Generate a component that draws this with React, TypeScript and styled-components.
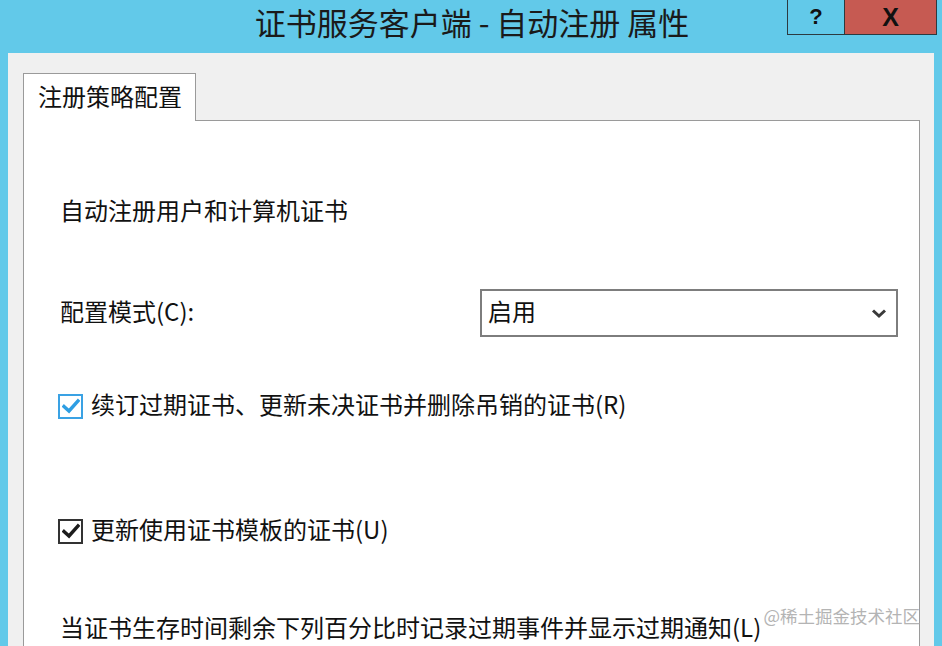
import styled, { createGlobalStyle } from 'styled-components';

// PARAM global
const GlobalStyle = createGlobalStyle`
  html, body {
    margin: 0;
    padding: 0;
    background: #62c9e9;
  }
  body {
    font-family: 'Noto Sans CJK SC', 'Noto Sans', sans-serif;
    color: #111;
  }
`;

// COMPONENT check mark
const CheckMark = ({ color }: { color: string }) => (
  <svg width='18' height='16' viewBox='0 0 18 16'>
    <path d='M2 8.5 L7 13 L16 3' fill='none' stroke={color} strokeWidth='3.4' strokeLinecap='square' />
  </svg>
);

// COMPONENT check row
const CheckRow = ({ label, focused, top }: { label: string; focused?: boolean; top: number }) => {
  return (
    <Panel.CheckRow $top={top}>
      <Panel.Box $focused={focused}>
        <CheckMark color={focused ? '#2e9ee3' : '#1c1c1c'} />
      </Panel.Box>
      <Panel.Label>{label}</Panel.Label>
    </Panel.CheckRow>
  );
};

// COMPONENT dialog
const App = () => {
  return (
    <>
      <GlobalStyle />
      <Win.Frame>
        <Win.TitleBar>
          <Win.Title>证书服务客户端 - 自动注册 属性</Win.Title>
          <Win.Buttons>
            <Win.HelpBtn>?</Win.HelpBtn>
            <Win.CloseBtn>X</Win.CloseBtn>
          </Win.Buttons>
        </Win.TitleBar>
        <Win.Body>
          <Tabs.Strip>
            <Tabs.Tab>注册策略配置</Tabs.Tab>
          </Tabs.Strip>
          <Panel.Container>
            <Panel.Line $top={73}>自动注册用户和计算机证书</Panel.Line>
            <Panel.ConfigRow>
              <Panel.Label>配置模式(C):</Panel.Label>
              <Panel.Combo>
                <Panel.Label>启用</Panel.Label>
                <svg width='16' height='11' viewBox='0 0 16 11'>
                  <path d='M2 2.5 L8 8 L14 2.5' fill='none' stroke='#3a3a3a' strokeWidth='3' />
                </svg>
              </Panel.Combo>
            </Panel.ConfigRow>
            <CheckRow top={53} focused label='续订过期证书、更新未决证书并删除吊销的证书(R)' />
            <CheckRow top={93} label='更新使用证书模板的证书(U)' />
            <Panel.Line $top={64}>当证书生存时间剩余下列百分比时记录过期事件并显示过期通知(L)</Panel.Line>
          </Panel.Container>
          <Watermark>@稀土掘金技术社区</Watermark>
        </Win.Body>
      </Win.Frame>
    </>
  );
};

// PARAM style
const Win = {
  Frame: styled.div`
    width: 942px;
    height: 646px;
    display: flex;
    flex-direction: column;
    background: #62c9e9;
    overflow: hidden;
  `,
  TitleBar: styled.div`
    height: 53px;
    display: flex;
    justify-content: center;
    position: relative;
    flex-shrink: 0;
  `,
  Title: styled.div`
    font-size: 31px;
    line-height: 44px;
    color: #1a1a1a;
    margin-left: 2px;
  `,
  Buttons: styled.div`
    position: absolute;
    top: 0;
    right: 5px;
    display: flex;
    height: 35px;
    border: 1px solid #2c3a40;
    border-top: none;
    box-sizing: border-box;
  `,
  HelpBtn: styled.div`
    width: 56px;
    border-right: 1px solid #2c3a40;
    display: flex;
    justify-content: center;
    align-items: center;
    font-family: 'Liberation Sans', sans-serif;
    font-weight: bold;
    font-size: 22px;
    color: #111;
  `,
  CloseBtn: styled.div`
    width: 91px;
    background: #c65a52;
    display: flex;
    justify-content: center;
    align-items: center;
    font-family: 'Liberation Sans', sans-serif;
    font-weight: bold;
    font-size: 25px;
    color: #111;
  `,
  Body: styled.div`
    flex: 1;
    margin: 0 8px;
    background: #f0f0f0;
    padding: 20px 14px 0 15px;
    display: flex;
    flex-direction: column;
    position: relative;
  `,
};

const Tabs = {
  Strip: styled.div`
    display: flex;
    margin-bottom: -1px;
    position: relative;
    z-index: 1;
  `,
  Tab: styled.div`
    width: 173px;
    height: 48px;
    box-sizing: border-box;
    background: #fff;
    border: 1px solid #9a9a9a;
    border-bottom: none;
    padding-left: 14px;
    font-size: 24px;
    line-height: 44px;
  `,
};

const Panel = {
  Container: styled.div`
    flex: 1;
    background: #fff;
    border: 1px solid #9a9a9a;
    border-bottom: none;
    padding: 0 21px 0 36px;
    display: flex;
    flex-direction: column;
  `,
  Line: styled.div<{ $top: number }>`
    margin-top: ${({ $top }) => $top}px;
    font-size: 24px;
    line-height: 32px;
    white-space: nowrap;
  `,
  Label: styled.span`
    display: block;
    line-height: 32px;
    padding-bottom: 5px;
  `,
  ConfigRow: styled.div`
    margin-top: 63px;
    display: flex;
    justify-content: space-between;
    align-items: center;
    font-size: 24px;
    height: 48px;
  `,
  Combo: styled.div`
    width: 418px;
    height: 48px;
    box-sizing: border-box;
    border: 2px solid #7d7d7d;
    display: flex;
    justify-content: space-between;
    align-items: center;
    padding: 0 9px 0 6px;
    font-size: 24px;
  `,
  CheckRow: styled.div<{ $top: number }>`
    margin-top: ${({ $top }) => $top}px;
    margin-left: -2px;
    display: flex;
    align-items: center;
    gap: 8px;
    height: 32px;
    font-size: 24px;
    white-space: nowrap;
  `,
  Box: styled.div<{ $focused?: boolean }>`
    width: 25px;
    height: 25px;
    box-sizing: border-box;
    border: 2px solid ${({ $focused }) => ($focused ? '#3aa2e4' : '#333')};
    display: flex;
    justify-content: center;
    align-items: center;
    background: #fff;
  `,
};

const Watermark = styled.div`
  position: absolute;
  right: 14px;
  bottom: 18px;
  font-size: 17.5px;
  color: #b4b4b4;
  white-space: nowrap;
`;

export default App;
